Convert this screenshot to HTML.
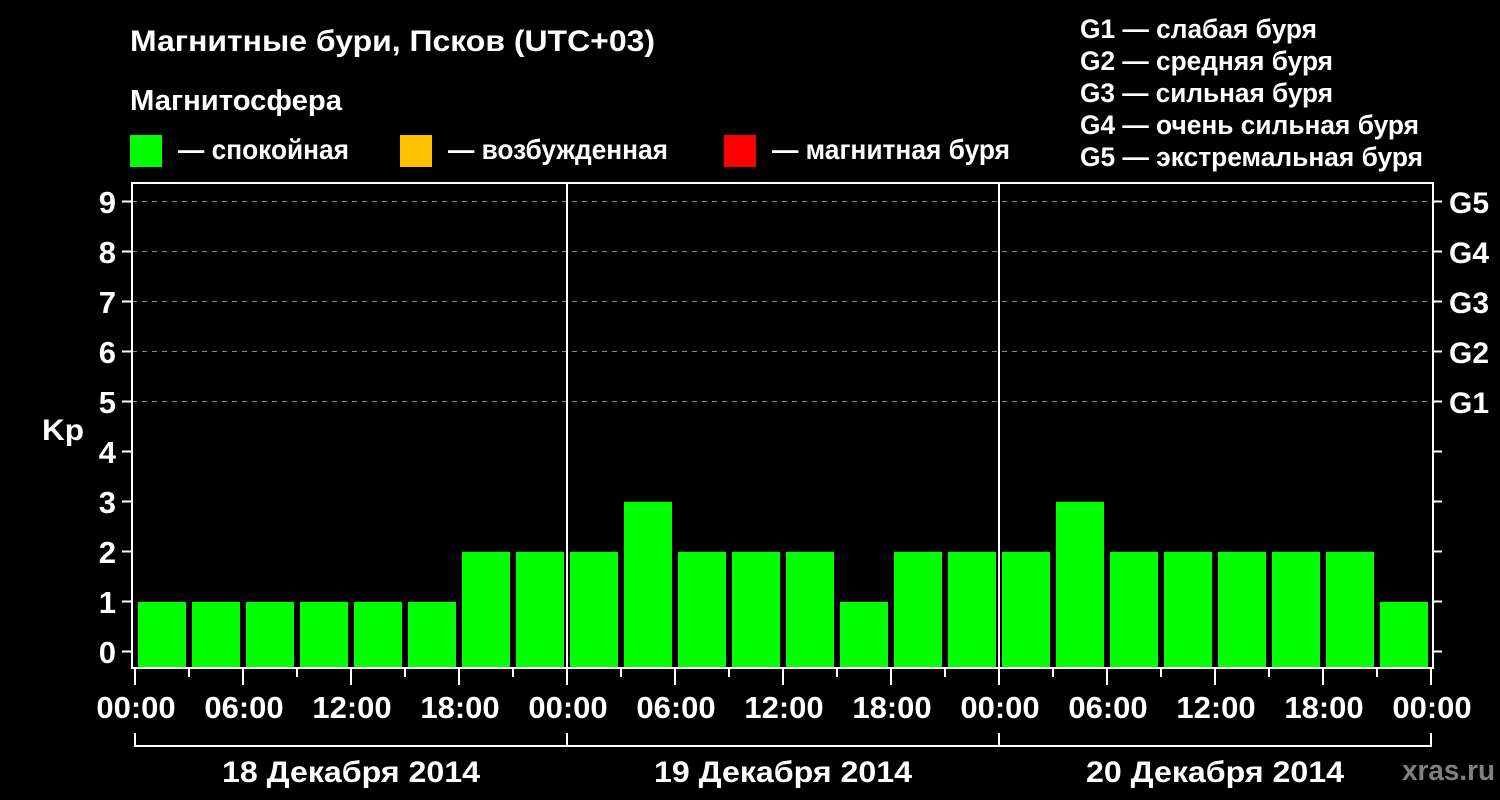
<!DOCTYPE html>
<html><head><meta charset="utf-8"><style>
html,body{margin:0;padding:0;background:#000;width:1500px;height:800px;overflow:hidden}
svg text{font-family:"Liberation Sans",sans-serif;font-weight:bold;fill:#fff}
</style></head><body>
<svg width="1500" height="800" xmlns="http://www.w3.org/2000/svg">
<text x="130" y="51" font-size="30" textLength="525" lengthAdjust="spacingAndGlyphs">Магнитные бури, Псков (UTC+03)</text>
<text x="130" y="110" font-size="29" textLength="212" lengthAdjust="spacingAndGlyphs">Магнитосфера</text>
<rect x="130" y="135" width="32" height="32" fill="#00ff00"/>
<text x="178" y="159" font-size="28" textLength="171" lengthAdjust="spacingAndGlyphs">— спокойная</text>
<rect x="400" y="135" width="32" height="32" fill="#ffc000"/>
<text x="448" y="159" font-size="28" textLength="220" lengthAdjust="spacingAndGlyphs">— возбужденная</text>
<rect x="724" y="135" width="32" height="32" fill="#ff0000"/>
<text x="772" y="159" font-size="28" textLength="238" lengthAdjust="spacingAndGlyphs">— магнитная буря</text>
<g font-size="27">
<text x="1080" y="38" textLength="237" lengthAdjust="spacingAndGlyphs">G1 — слабая буря</text>
<text x="1080" y="70" textLength="253" lengthAdjust="spacingAndGlyphs">G2 — средняя буря</text>
<text x="1080" y="102" textLength="253" lengthAdjust="spacingAndGlyphs">G3 — сильная буря</text>
<text x="1080" y="134" textLength="339" lengthAdjust="spacingAndGlyphs">G4 — очень сильная буря</text>
<text x="1080" y="166" textLength="343" lengthAdjust="spacingAndGlyphs">G5 — экстремальная буря</text>
</g>
<g stroke="#888" stroke-width="1" stroke-dasharray="5,5">
<line x1="132" y1="201.5" x2="1432" y2="201.5"/>
<line x1="132" y1="251.5" x2="1432" y2="251.5"/>
<line x1="132" y1="301.5" x2="1432" y2="301.5"/>
<line x1="132" y1="351.5" x2="1432" y2="351.5"/>
<line x1="132" y1="401.5" x2="1432" y2="401.5"/>
</g>
<g fill="#00ff00" id="bars"></g>
<script>
var v=[1,1,1,1,1,1,2,2,2,3,2,2,2,1,2,2,2,3,2,2,2,2,2,1],g=document.getElementById('bars');
for(var i=0;i<24;i++){var r=document.createElementNS('http://www.w3.org/2000/svg','rect');var t=652-50.1*v[i];r.setAttribute('x',138+54*i);r.setAttribute('y',t);r.setAttribute('width',48);r.setAttribute('height',667-t);g.appendChild(r);}
</script>
<g stroke="#fff" stroke-width="2" fill="none">
<rect x="132" y="183" width="1301" height="485"/>
<line x1="567" y1="183" x2="567" y2="668"/>
<line x1="999" y1="183" x2="999" y2="668"/>
<path d="M122 201.5H132M122 251.5H132M122 301.5H132M122 351.5H132M122 401.5H132M122 451.5H132M122 501.5H132M122 551.5H132M122 601.5H132M122 651.5H132"/>
<path d="M1433 201.5H1442M1433 251.5H1442M1433 301.5H1442M1433 351.5H1442M1433 401.5H1442M1433 451.5H1442M1433 501.5H1442M1433 551.5H1442M1433 601.5H1442M1433 651.5H1442"/>
<path d="M135 668V685M243 668V685M351 668V685M459 668V685M567 668V685M675 668V685M783 668V685M891 668V685M999 668V685M1107 668V685M1215 668V685M1323 668V685M1431 668V685"/>
<path d="M189 668V677M297 668V677M405 668V677M513 668V677M621 668V677M729 668V677M837 668V677M945 668V677M1053 668V677M1161 668V677M1269 668V677M1377 668V677"/>
<path d="M135 733V746H1431V733M567 733V746M999 733V746"/>
</g>
<g font-size="31" text-anchor="end">
<text x="116" y="213">9</text><text x="116" y="263">8</text><text x="116" y="313">7</text><text x="116" y="363">6</text><text x="116" y="413">5</text><text x="116" y="463">4</text><text x="116" y="513">3</text><text x="116" y="563">2</text><text x="116" y="613">1</text><text x="116" y="663">0</text>
</g>
<text x="42" y="440" font-size="30" textLength="42" lengthAdjust="spacingAndGlyphs">Kp</text>
<g font-size="30">
<text x="1449" y="213">G5</text><text x="1449" y="263">G4</text><text x="1449" y="313">G3</text><text x="1449" y="363">G2</text><text x="1449" y="413">G1</text>
</g>
<g font-size="31" text-anchor="middle">
<text x="136" y="718">00:00</text><text x="244" y="718">06:00</text><text x="352" y="718">12:00</text><text x="460" y="718">18:00</text><text x="568" y="718">00:00</text><text x="676" y="718">06:00</text><text x="784" y="718">12:00</text><text x="892" y="718">18:00</text><text x="1000" y="718">00:00</text><text x="1108" y="718">06:00</text><text x="1216" y="718">12:00</text><text x="1324" y="718">18:00</text><text x="1432" y="718">00:00</text>
</g>
<g font-size="30">
<text x="222" y="782" textLength="258" lengthAdjust="spacingAndGlyphs">18 Декабря 2014</text><text x="654" y="782" textLength="258" lengthAdjust="spacingAndGlyphs">19 Декабря 2014</text><text x="1086" y="782" textLength="258" lengthAdjust="spacingAndGlyphs">20 Декабря 2014</text>
</g>
<text x="1402" y="780" font-size="29" textLength="93" lengthAdjust="spacingAndGlyphs" style="fill:#808080">xras.ru</text>
</svg>
</body></html>
